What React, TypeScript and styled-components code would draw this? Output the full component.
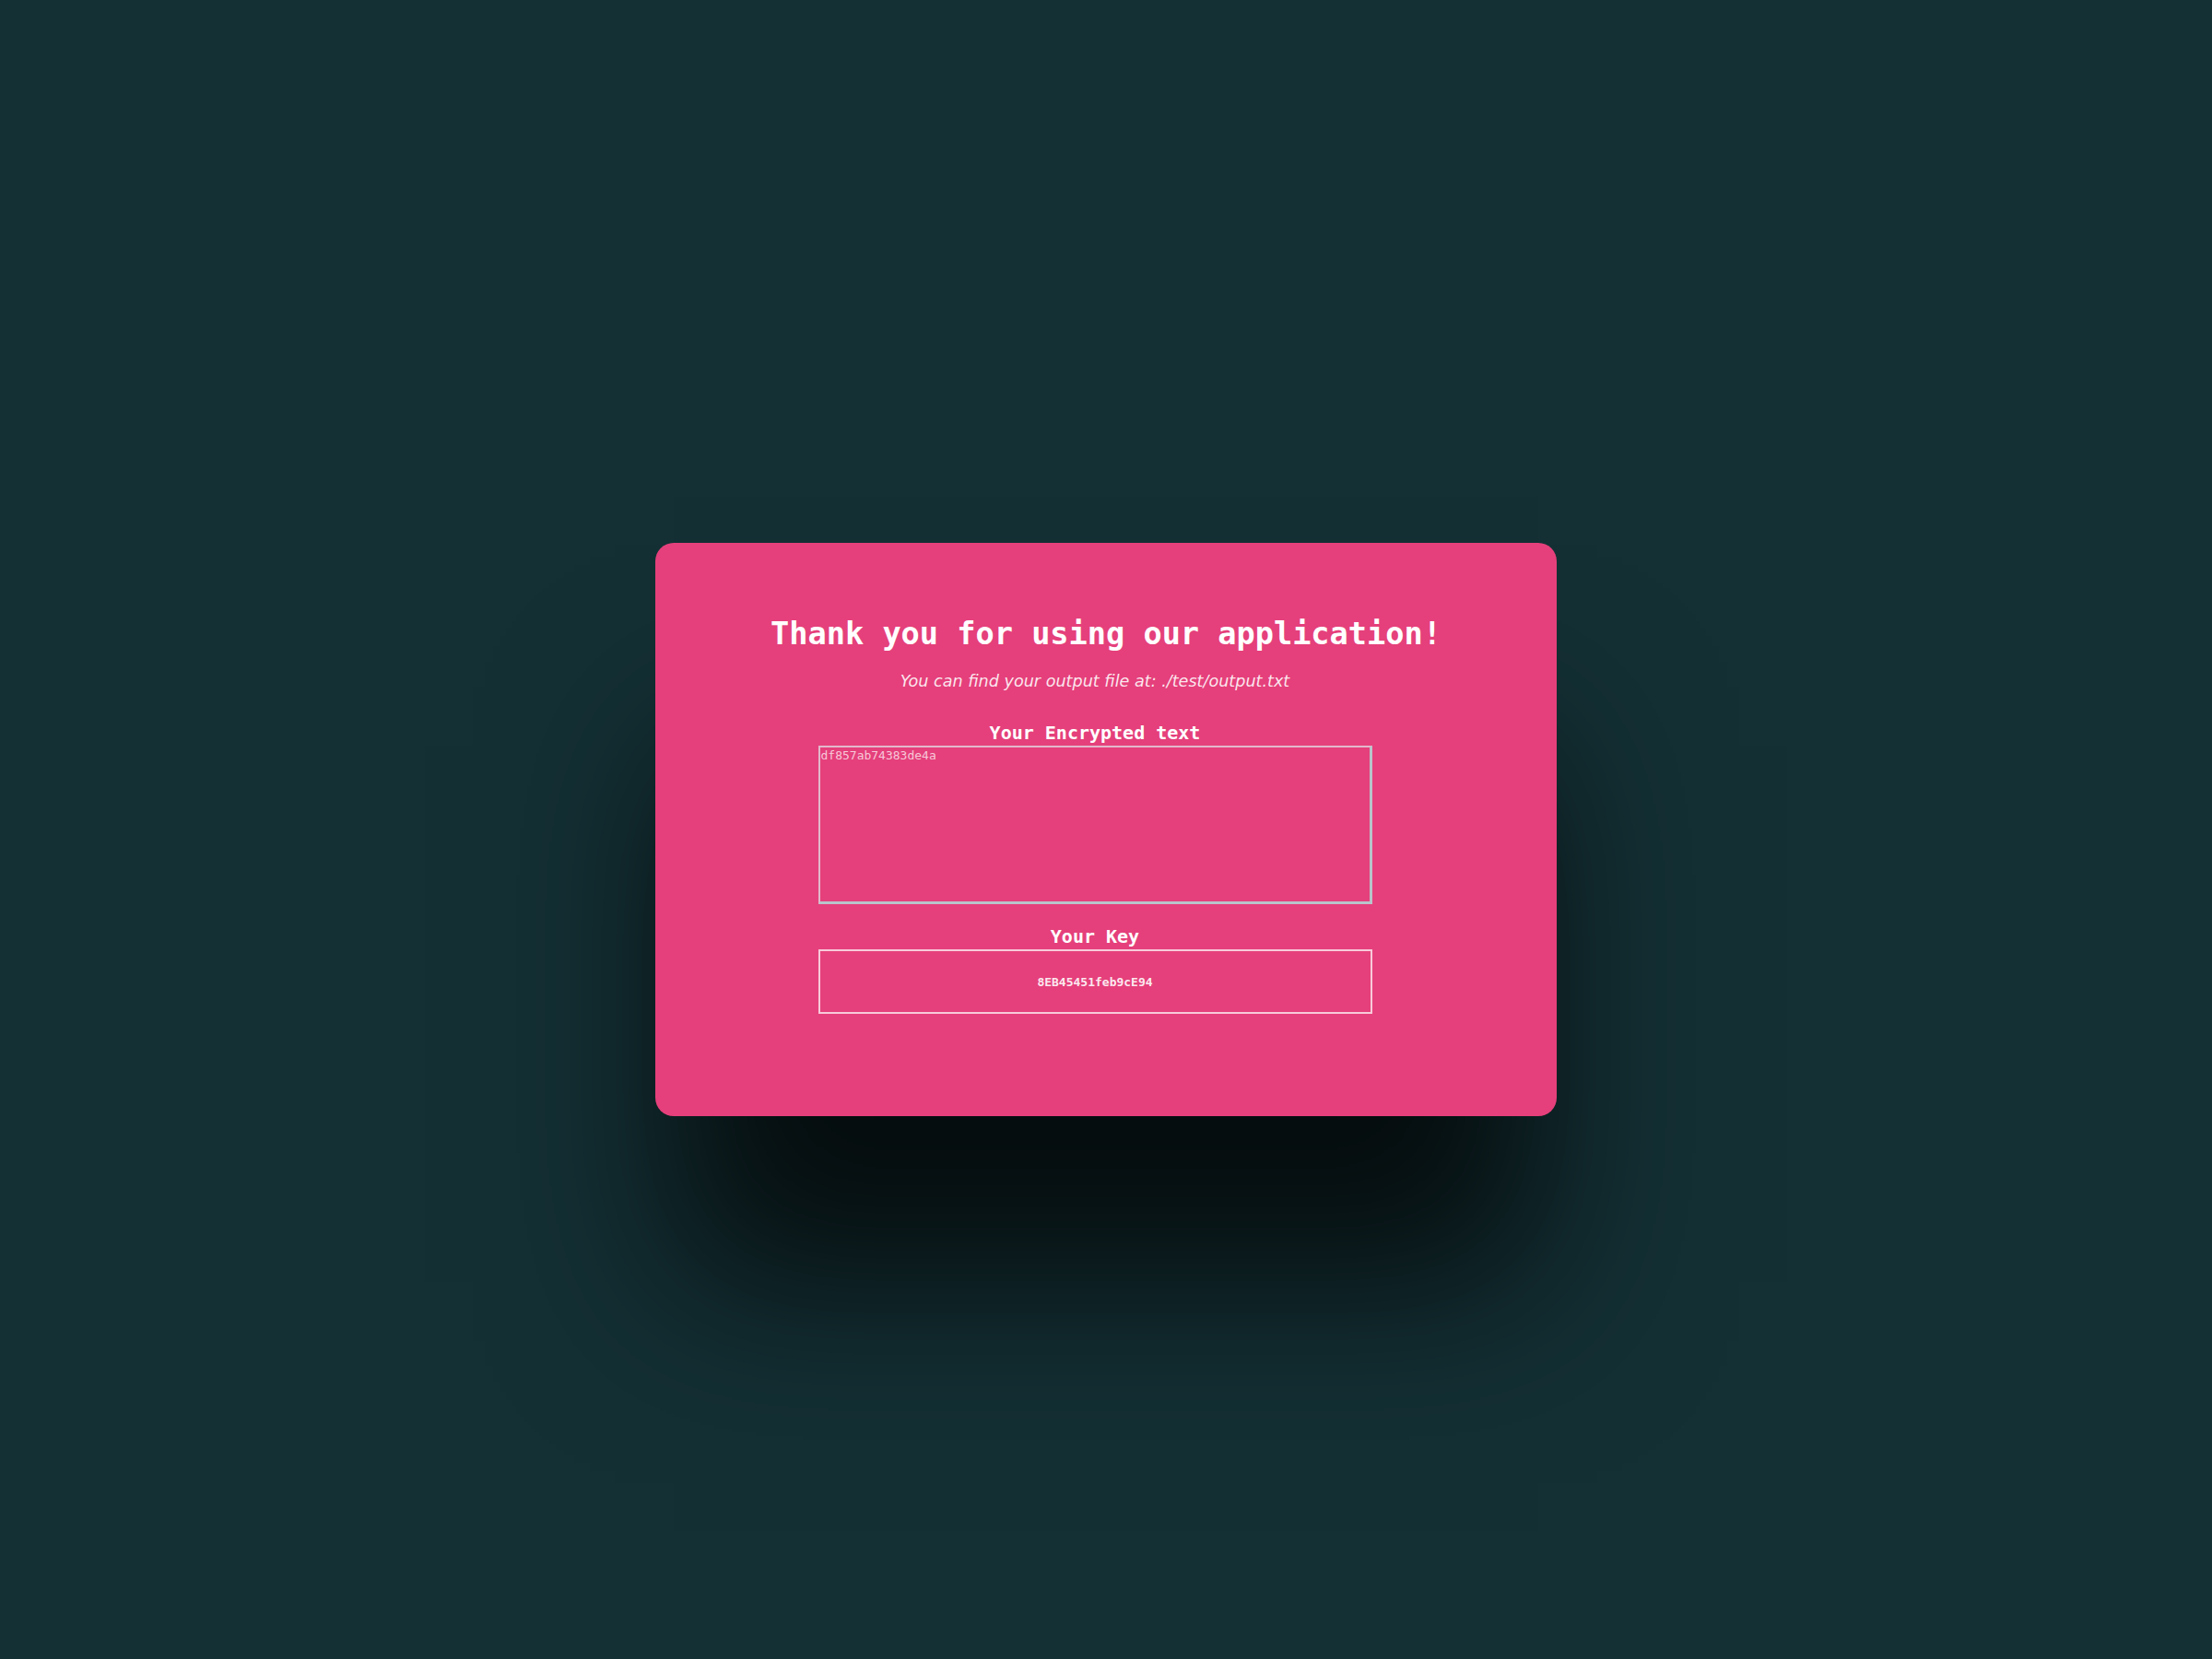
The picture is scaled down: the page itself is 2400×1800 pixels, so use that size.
import { useEffect, useRef } from 'react';
import styled, { createGlobalStyle } from 'styled-components';

const GlobalStyle = createGlobalStyle`
  html, body {
    margin: 0;
    padding: 0;
    background: #143035;
  }
  body {
    font-family: "DejaVu Sans Mono", "Liberation Mono", monospace;
  }
`;

const Page = styled.main`
  min-height: 100vh;
  display: flex;
  align-items: center;
  justify-content: center;
`;

const Card = styled.section`
  width: 978px;
  height: 622px;
  box-sizing: border-box;
  padding-top: 79px;
  background: #e5407b;
  border-radius: 20px;
  box-shadow: 0 200px 180px -20px rgba(0, 0, 0, 0.75);
  display: flex;
  flex-direction: column;
  align-items: center;
`;

const Title = styled.h1`
  margin: 0;
  font-family: "DejaVu Sans Mono", monospace;
  font-size: 33.6px;
  font-weight: bold;
  line-height: normal;
  color: #fff;
`;

const Content = styled.div`
  width: 100%;
  box-sizing: border-box;
  padding-right: 24px;
  display: flex;
  flex-direction: column;
  align-items: center;
`;

const Subtitle = styled.p`
  margin: 22px 0 34px;
  font-family: "DejaVu Sans", Verdana, sans-serif;
  font-style: italic;
  font-size: 17.6px;
  line-height: normal;
  color: rgba(255, 255, 255, 0.88);
`;

const Field = styled.div<{ $gap?: number }>`
  display: flex;
  flex-direction: column;
  align-items: center;
  margin-top: ${(p) => p.$gap ?? 0}px;
`;

const Label = styled.label`
  font-family: "DejaVu Sans Mono", monospace;
  font-weight: bold;
  font-size: 20px;
  line-height: normal;
  color: #fff;
  margin-bottom: 2px;
`;

const TextBox = styled.textarea`
  width: 601px;
  height: 172px;
  box-sizing: border-box;
  margin: 0;
  padding: 1px 1px;
  resize: none;
  background: transparent;
  font-family: "DejaVu Sans Mono", monospace;
  font-size: 13px;
  color: rgba(255, 255, 255, 0.72);
  caret-color: #3a3a3a;
  border-style: solid;
  border-width: 2px 3px 3px 2px;
  border-color: rgba(225, 225, 232, 0.75) #b9c4cb #b9c4cb rgba(225, 225, 232, 0.75);
  outline: none;
`;

const KeyBox = styled.input`
  width: 601px;
  height: 70px;
  box-sizing: border-box;
  margin: 0;
  padding: 0;
  background: transparent;
  border: 2px solid rgba(255, 255, 255, 0.72);
  font-family: "DejaVu Sans Mono", monospace;
  font-weight: bold;
  font-size: 13px;
  color: rgba(255, 255, 255, 0.9);
  text-align: center;
  outline: none;
`;

const encrypted = 'df857ab74383de4a';
const key = '8EB45451feb9cE94';

export default function App() {
  const textRef = useRef<HTMLTextAreaElement>(null);

  useEffect(() => {
    const el = textRef.current;
    if (el) {
      el.focus();
      el.setSelectionRange(encrypted.length, encrypted.length);
    }
  }, []);

  return (
    <>
      <GlobalStyle />
      <Page>
        <Card>
          <Title>Thank you for using our application!</Title>
          <Content>
            <Subtitle>You can find your output file at: ./test/output.txt</Subtitle>
            <Field>
              <Label htmlFor="encrypted">Your Encrypted text</Label>
              <TextBox id="encrypted" ref={textRef} defaultValue={encrypted} spellCheck={false} />
            </Field>
            <Field $gap={23}>
              <Label htmlFor="key">Your Key</Label>
              <KeyBox id="key" readOnly value={key} />
            </Field>
          </Content>
        </Card>
      </Page>
    </>
  );
}
